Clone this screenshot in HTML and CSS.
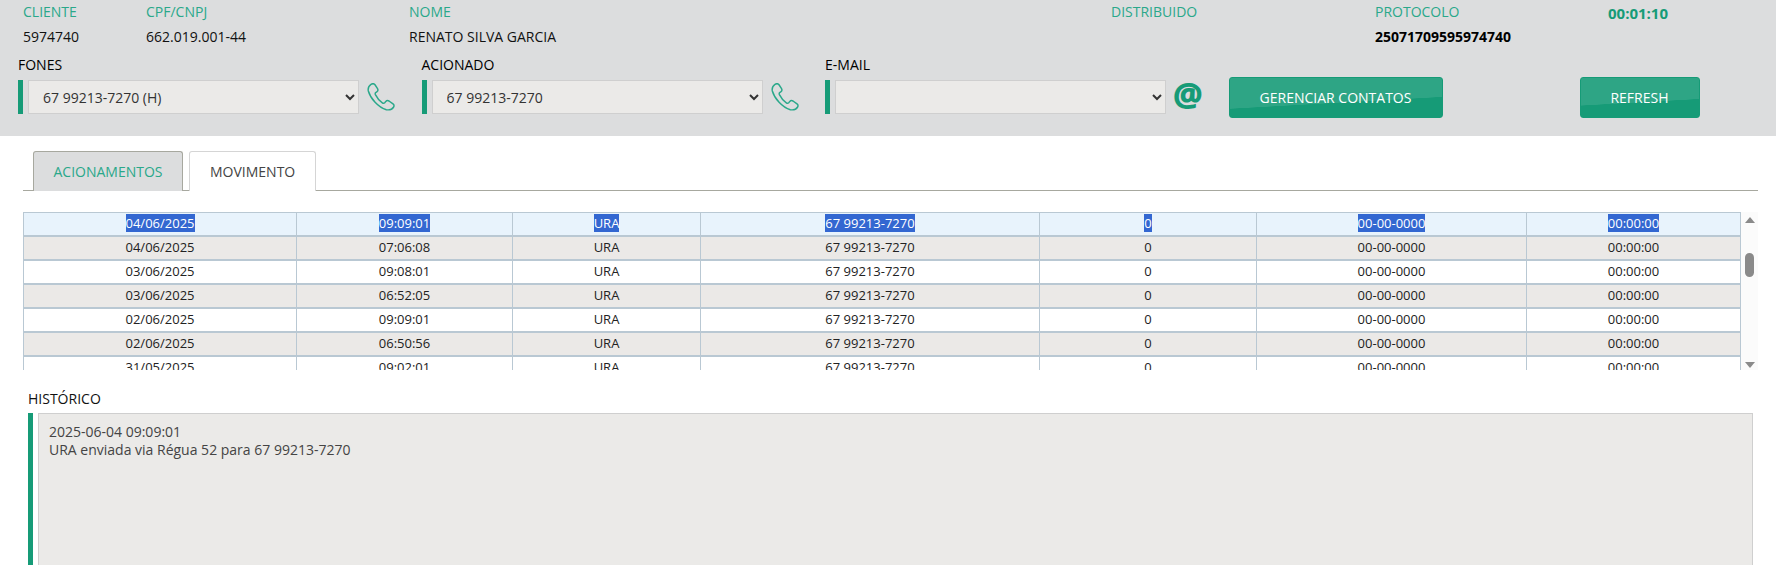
FILE: index.html
```html
<!DOCTYPE html>
<html lang="pt-BR">
<head>
    <meta charset="UTF-8">
    <title>Acionamentos</title>
    <link rel="stylesheet" href="styles.css">
</head>
<body>
    <header class="top">
        <div class="info">
            <div><span class="lbl">CLIENTE</span><span class="val">5974740</span></div>
            <div><span class="lbl">CPF/CNPJ</span><span class="val">662.019.001-44</span></div>
            <div><span class="lbl">NOME</span><span class="val">RENATO SILVA GARCIA</span></div>
            <div><span class="lbl">DISTRIBUIDO</span></div>
            <div><span class="lbl">PROTOCOLO</span><span class="val strong">25071709595974740</span></div>
            <div class="timer">00:01:10</div>
        </div>

        <div class="contacts">
            <div class="field">
                <label for="fones">FONES</label>
                <div class="field_row">
                    <select id="fones"><option>67 99213-7270 (H)</option></select>
                    <svg class="ico_phone" viewBox="1.5 1.5 21 21"><path d="M4.5 2.5C3 3.5 2 5 2.5 7.5C4 13 10 20 16 21.5C18.5 22 20.5 21 21.5 19.5C22 18.5 21.8 17.8 21 17.2L18 15C17 14.4 16.2 14.6 15.6 15.3L14.8 16.3C14.3 16.8 13.7 16.9 13 16.4C10.8 14.8 9 12.6 7.8 10.2C7.5 9.5 7.6 9 8.2 8.6L9 8C9.7 7.4 9.9 6.6 9.4 5.7L7.5 2.8C6.8 1.9 5.5 1.9 4.5 2.5Z"/></svg>
                </div>
            </div>
            <div class="field">
                <label for="acionado">ACIONADO</label>
                <div class="field_row">
                    <select id="acionado"><option>67 99213-7270</option></select>
                    <svg class="ico_phone" viewBox="1.5 1.5 21 21"><path d="M4.5 2.5C3 3.5 2 5 2.5 7.5C4 13 10 20 16 21.5C18.5 22 20.5 21 21.5 19.5C22 18.5 21.8 17.8 21 17.2L18 15C17 14.4 16.2 14.6 15.6 15.3L14.8 16.3C14.3 16.8 13.7 16.9 13 16.4C10.8 14.8 9 12.6 7.8 10.2C7.5 9.5 7.6 9 8.2 8.6L9 8C9.7 7.4 9.9 6.6 9.4 5.7L7.5 2.8C6.8 1.9 5.5 1.9 4.5 2.5Z"/></svg>
                </div>
            </div>
            <div class="field">
                <label for="email">E-MAIL</label>
                <div class="field_row">
                    <select id="email"><option></option></select>
                    <span class="ico_at">@</span>
                </div>
            </div>
            <button type="button" class="btn btn_contatos">GERENCIAR CONTATOS</button>
            <button type="button" class="btn btn_refresh">REFRESH</button>
        </div>
    </header>

    <nav class="tabs">
        <a class="tab tab_on">ACIONAMENTOS</a>
        <a class="tab">MOVIMENTO</a>
    </nav>

    <section class="grid_wrap">
        <div class="grid_scroll">
            <table class="grid">
                <colgroup>
                    <col class="c1"><col class="c2"><col class="c3"><col class="c4"><col class="c5"><col class="c6"><col class="c7">
                </colgroup>
                <tbody>
                    <tr class="sel">
                        <td><span>04/06/2025</span></td><td><span>09:09:01</span></td><td><span>URA</span></td><td><span>67 99213-7270</span></td><td><span>0</span></td><td><span>00-00-0000</span></td><td><span>00:00:00</span></td>
                    </tr>
                    <tr class="alt"><td>04/06/2025</td><td>07:06:08</td><td>URA</td><td>67 99213-7270</td><td>0</td><td>00-00-0000</td><td>00:00:00</td></tr>
                    <tr><td>03/06/2025</td><td>09:08:01</td><td>URA</td><td>67 99213-7270</td><td>0</td><td>00-00-0000</td><td>00:00:00</td></tr>
                    <tr class="alt"><td>03/06/2025</td><td>06:52:05</td><td>URA</td><td>67 99213-7270</td><td>0</td><td>00-00-0000</td><td>00:00:00</td></tr>
                    <tr><td>02/06/2025</td><td>09:09:01</td><td>URA</td><td>67 99213-7270</td><td>0</td><td>00-00-0000</td><td>00:00:00</td></tr>
                    <tr class="alt"><td>02/06/2025</td><td>06:50:56</td><td>URA</td><td>67 99213-7270</td><td>0</td><td>00-00-0000</td><td>00:00:00</td></tr>
                    <tr><td>31/05/2025</td><td>09:02:01</td><td>URA</td><td>67 99213-7270</td><td>0</td><td>00-00-0000</td><td>00:00:00</td></tr>
                </tbody>
            </table>
        </div>
        <div class="sbar">
            <i class="arrow_up"></i>
            <i class="thumb"></i>
            <i class="arrow_down"></i>
        </div>
    </section>

    <section class="hist">
        <h2>HISTÓRICO</h2>
        <div class="hist_box">2025-06-04 09:09:01<br>URA enviada via Régua 52 para 67 99213-7270</div>
    </section>
</body>
</html>
```

FILE: styles.css
```css
*{box-sizing:border-box;}
body{margin:0;height:565px;overflow:hidden;background:#fff;color:#000;font-family:"Open Sans","Liberation Sans",sans-serif;font-size:14px;}

.top{height:136px;background:#dcddde;padding:4px 0 0 0;}

.info{display:grid;grid-template-columns:123px 263px 702px 264px 233px 100px;padding-left:23px;height:52px;}
.lbl{display:block;color:#2aa88a;line-height:15px;}
.val{display:block;margin-top:9px;line-height:18px;color:#111;}
.strong{font-weight:700;color:#000;}
.timer{color:#169b77;font-weight:700;font-size:15px;line-height:18px;}

.contacts{display:flex;align-items:flex-start;padding:0 0 0 18px;height:80px;}
.field{width:403.5px;}
.field label{display:block;line-height:18px;margin-bottom:6px;}
.field_row{display:flex;align-items:center;}
.field_row select{width:331px;height:34px;border:1px solid #cfcfcf;background:#ebeae8;color:#333;font:14px "Open Sans","Liberation Sans",sans-serif;padding:0 0 0 10px;border-radius:0;}
.field_row::before{content:"";width:5px;height:34px;background:#169b77;margin-right:5px;}

.ico_phone{width:28px;height:28px;margin-left:8px;}
.ico_phone path{fill:none;stroke:#2aa88a;stroke-width:1.1;}
.ico_at{margin:-4px 0 0 7px;color:#169b77;font-size:33px;font-weight:800;line-height:34px;}

.btn{height:41px;margin-top:21px;border:1px solid #169b77;border-radius:3px;background:linear-gradient(176.8deg,#2ea585 0,#2ea585 60%,#169b77 61%,#169b77 100%);color:#fff;font:14px "Open Sans","Liberation Sans",sans-serif;}
.btn_contatos{width:214px;}
.btn_refresh{width:120px;margin-left:137px;}

.tabs{display:flex;gap:6px;margin:15px 18px 0 23px;padding-left:10px;border-bottom:1px solid #a7a89f;height:40px;}
.tab{display:flex;align-items:center;justify-content:center;height:40px;border:1px solid #d5d5d5;border-bottom:0;border-radius:3px 3px 0 0;padding:0 20px;color:#444;background:#fff;}
.tab_on{background:#dcddde;border-color:#a7a89f;color:#2aa88a;width:150px;}

.grid_wrap{display:flex;margin:21px 18px 0 23px;height:158px;}
.grid_scroll{width:1718px;height:158px;overflow:hidden;}
.grid{width:100%;border-collapse:collapse;table-layout:fixed;color:#222;font-size:13px;}
.c1{width:273px;}
.c2{width:216px;}
.c3{width:188px;}
.c4{width:339px;}
.c5{width:217px;}
.c6{width:270px;}
.grid td{height:24px;padding:0 0 2px;text-align:center;line-height:18px;border:1px solid #b9c8d3;border-width:0 1px 2px 1px;}
.grid tr:first-child td{height:23px;border-top-width:1px;}
.alt td{background:#ebe9e7;}
.sel td{background:#e8f3fc;}
.sel span{background:#3367d1;color:#fff;display:inline-block;}

.sbar{width:17px;background:#fbfbfb;display:flex;flex-direction:column;align-items:center;}
.arrow_up,.arrow_down{width:0;height:0;border-left:5px solid transparent;border-right:5px solid transparent;}
.arrow_up{border-bottom:6px solid #8a8a8a;margin-top:5px;}
.arrow_down{border-top:6px solid #8a8a8a;margin-top:auto;margin-bottom:2px;}
.thumb{width:9px;height:24px;border-radius:5px;background:#8a8a8a;margin-top:30px;}

.hist{margin:20px 23px 0 28px;}
.hist h2{margin:0 0 5px;font-size:14px;font-weight:400;line-height:18px;color:#111;}
.hist_box{height:152px;border:1px solid #cfcfcf;border-bottom:0;background:#ebeae8;padding:9px 10px;line-height:18px;color:#444;margin-left:10px;position:relative;}
.hist_box::before{content:"";position:absolute;left:-11px;top:-1px;bottom:0;width:5px;background:#169b77;}
```
